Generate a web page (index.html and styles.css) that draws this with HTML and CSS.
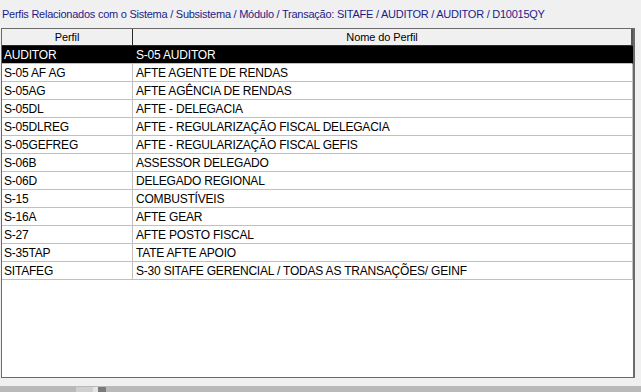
FILE: index.html
```html
<!DOCTYPE html>
<html>
<head>
<meta charset="utf-8">
<link rel="stylesheet" href="styles.css">
</head>
<body>
<div class="title">Perfis Relacionados com o Sistema / Subsistema / Módulo / Transação: SITAFE / AUDITOR / AUDITOR / D10015QY</div>
<div class="frame">
  <div class="grid">
    <div class="row head"><div class="c1">Perfil</div><div class="c2">Nome do Perfil</div></div>
    <div class="row sel"><div class="c1">AUDITOR</div><div class="c2">S-05 AUDITOR</div></div>
    <div class="row"><div class="c1">S-05 AF AG</div><div class="c2">AFTE AGENTE DE RENDAS</div></div>
    <div class="row"><div class="c1">S-05AG</div><div class="c2">AFTE AGÊNCIA DE RENDAS</div></div>
    <div class="row"><div class="c1">S-05DL</div><div class="c2">AFTE - DELEGACIA</div></div>
    <div class="row"><div class="c1">S-05DLREG</div><div class="c2">AFTE - REGULARIZAÇÃO FISCAL DELEGACIA</div></div>
    <div class="row"><div class="c1">S-05GEFREG</div><div class="c2">AFTE - REGULARIZAÇÃO FISCAL GEFIS</div></div>
    <div class="row"><div class="c1">S-06B</div><div class="c2">ASSESSOR DELEGADO</div></div>
    <div class="row"><div class="c1">S-06D</div><div class="c2">DELEGADO REGIONAL</div></div>
    <div class="row"><div class="c1">S-15</div><div class="c2">COMBUSTÍVEIS</div></div>
    <div class="row"><div class="c1">S-16A</div><div class="c2">AFTE GEAR</div></div>
    <div class="row"><div class="c1">S-27</div><div class="c2">AFTE POSTO FISCAL</div></div>
    <div class="row"><div class="c1">S-35TAP</div><div class="c2">TATE AFTE APOIO</div></div>
    <div class="row"><div class="c1">SITAFEG</div><div class="c2">S-30 SITAFE GERENCIAL / TODAS AS TRANSAÇÕES/ GEINF</div></div>
  </div>
</div>
<div class="strip"><span class="blob b1"></span><span class="blob b2"></span><span class="blob b3"></span></div>
</body>
</html>
```

FILE: styles.css
```css
html, body {
  margin: 0;
  padding: 0;
  background: #f0f0f0;
  font-family: "Liberation Sans", Arial, sans-serif;
  font-size: 12px;
  color: #000;
  width: 641px;
  height: 392px;
  overflow: hidden;
}
.title {
  height: 28px;
  box-sizing: border-box;
  padding: 7px 0 0 2px;
  line-height: 14px;
  font-size: 11px;
  letter-spacing: -0.25px;
  color: #1c1c8a;
  white-space: nowrap;
}
.frame {
  margin-left: 1px;
  width: 634px;
  height: 350px;
  box-sizing: border-box;
  border: 1px solid #6a6a6a;
  border-right-width: 2px;
  background: #fff;
}
.grid {
  width: 631px;
}
.row {
  display: grid;
  grid-template-columns: 131px 1fr;
  height: 18px;
  box-sizing: border-box;
  border-bottom: 1px solid #c0c0c0;
  border-right: 1px solid #c0c0c0;
  padding-top: 2px;
  line-height: 15px;
  letter-spacing: -0.2px;
  white-space: nowrap;
}
.row .c1 {
  border-right: 1px solid #c0c0c0;
  margin-top: -2px;
  padding-top: 2px;
  padding-left: 2px;
}
.row .c2 {
  padding-left: 3px;
}
.row.head {
  height: 17px;
  padding-top: 0;
  background: #f0f0f0;
  border-bottom: 1px solid #2a2a2a;
  border-right: 2px solid #555;
  line-height: 16px;
  font-size: 11px;
  letter-spacing: -0.1px;
  text-align: center;
}
.row.head .c1 {
  border-right: 1px solid #2a2a2a;
  margin-top: 0;
  padding-top: 0;
  padding-left: 0;
}
.row.head .c2 {
  padding-left: 0;
}
.row.sel {
  background: #000;
  color: #fff;
  border-right-color: #000;
}
.row.sel .c1 {
  border-right-color: #000;
}
.strip {
  margin-top: 8px;
  height: 7px;
  background: #b9b9b9;
  position: relative;
}
.blob {
  position: absolute;
  top: 1px;
  height: 5px;
}
.b1 { left: 76px; width: 22px; background: #cfcfcf; }
.b2 { left: 93px; width: 10px; background: #e4e4e4; }
.b3 { left: 98px; width: 8px; background: #7a7a7a; }
```
